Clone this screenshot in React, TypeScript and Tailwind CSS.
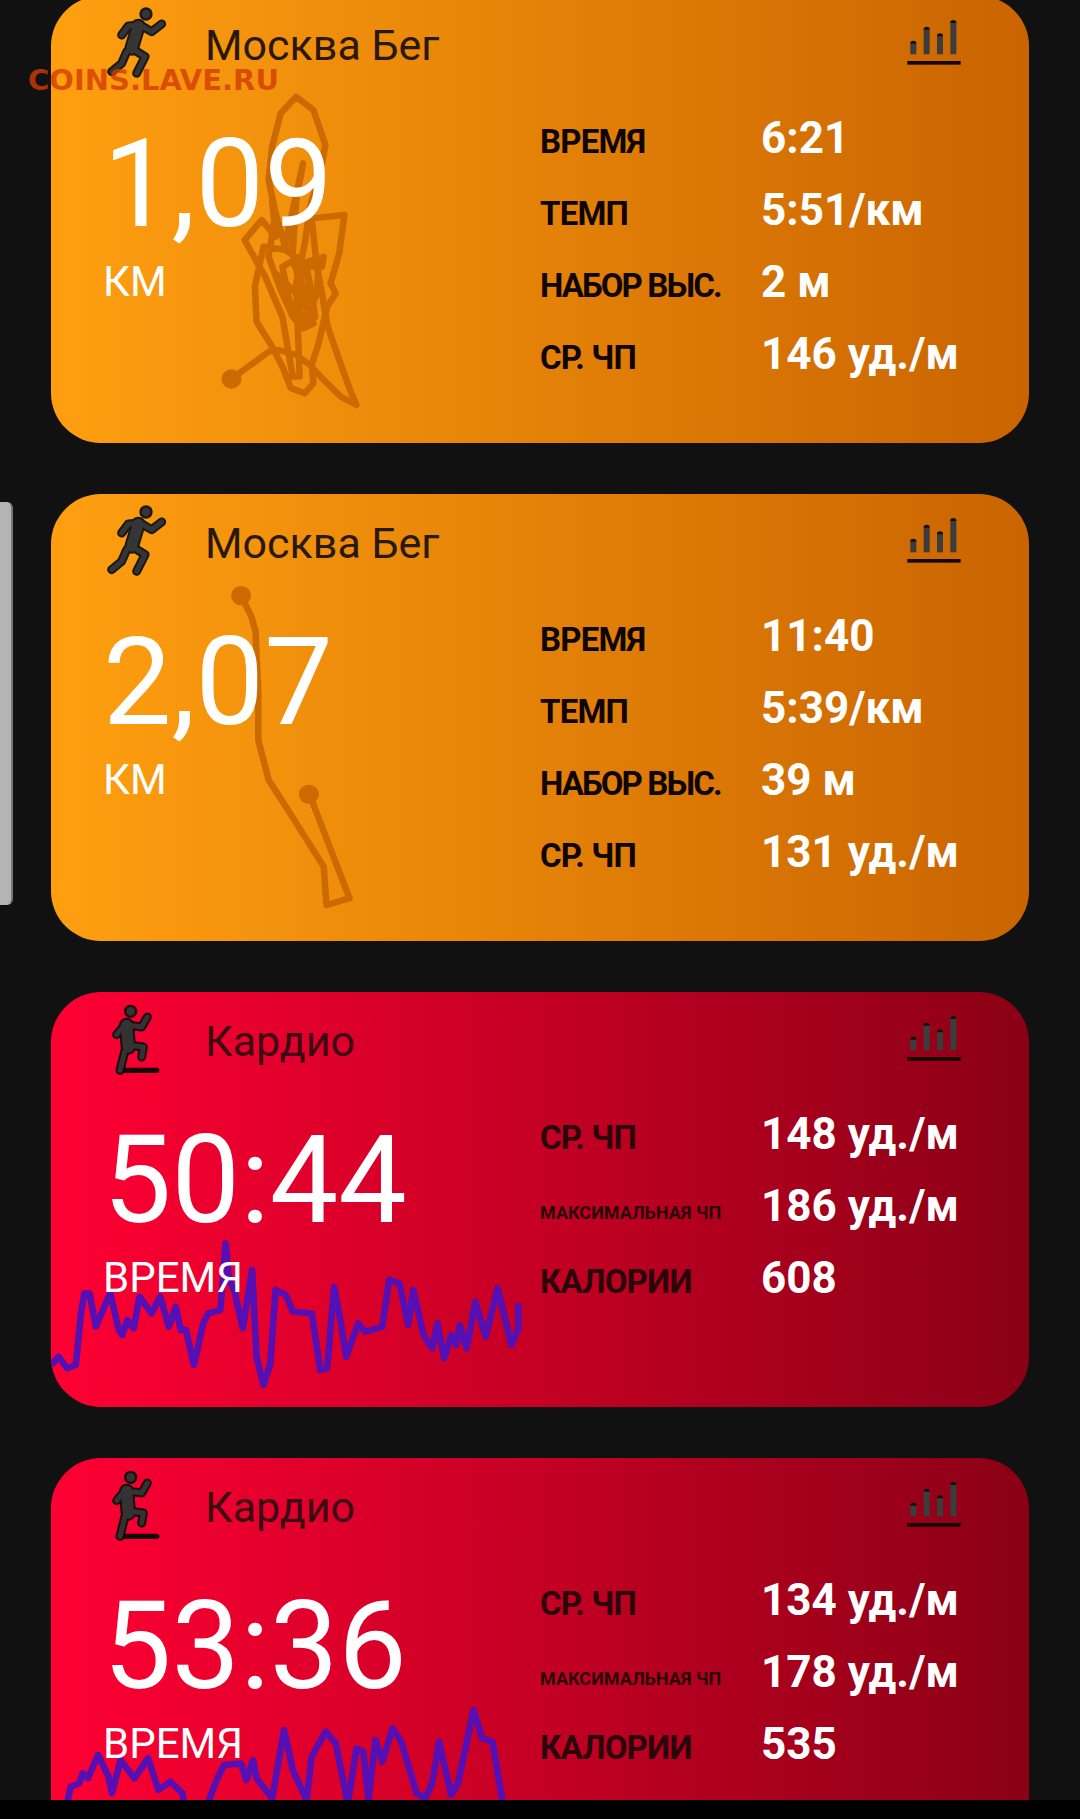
const ROUTE_ONE =
  "672,1137 780,1055 810,1050 860,1065 900,1095 940,1140 990,1190 1035,1215 1015,1165 985,1080 950,975 935,880 920,800 905,655 1000,645 985,760 960,850 975,880 950,920 925,1030 905,1095 910,1150 885,1180 845,1165 820,1100 790,1040 745,965 740,860 765,740 830,750 880,790 940,770 935,800 890,800 905,880 915,950 880,985 850,950 815,870 780,770 800,640 780,540 790,440 815,340 860,290 910,330 945,435 925,540 900,620 885,730 860,850 870,1130 850,1130 820,950 770,830 710,720 760,660 800,710 790,600 830,750 835,700 880,490 860,600 850,760 880,900 910,970 880,985 840,900 820,800 870,770 900,850 860,960 900,940 870,820 850,790 925,800 920,880 890,960 830,900 800,820 860,880 880,970"

const ROUTE_TWO =
  "700,347 730,410 742,455 750,640 750,780 780,900 830,980 940,1160 948,1275 1015,1255 905,960 897,943"

const PULSE_ONE =
  "150,1155 170,1130 195,1165 220,1155 235,1000 245,940 260,940 278,1040 320,940 345,1050 355,1065 370,1020 388,1045 405,950 440,1000 465,950 490,1040 510,980 525,1050 540,1050 563,1155 590,1030 605,1000 640,990 655,790 665,900 680,930 705,1045 732,870 745,1130 765,1215 785,1150 800,930 830,945 850,995 905,1000 930,1170 950,1165 970,920 990,1030 1005,1130 1040,1030 1060,1055 1110,1040 1130,900 1160,910 1185,1035 1200,930 1230,1065 1255,1105 1270,1030 1290,1135 1310,1065 1325,1095 1335,1035 1355,1105 1380,965 1410,1070 1445,925 1485,1095 1505,1045 1505,970"

const PULSE_TWO =
  "195,1090 205,1040 230,1030 240,1000 255,1015 285,945 315,1010 325,1060 350,960 390,1015 430,955 460,1050 495,1025 530,1060 535,1100 600,1100 625,1030 650,975 700,970 715,1020 735,960 745,1015 790,1075 825,870 850,990 890,1080 905,950 945,875 975,910 1010,1090 1035,925 1055,935 1070,1080 1090,900 1110,965 1140,865 1165,905 1210,1060 1235,1075 1255,1030 1275,905 1310,1065 1330,1030 1375,810 1400,895 1430,905 1460,1090"

function RunIcon() {
  const limbs = ["95,105 115,78 150,75 185,95 215,72", "125,145 165,170 140,220", "110,155 95,190 65,215"]
  return (
    <svg viewBox="0 0 300 270" className="mt-[8px] h-[90px] w-[100px] shrink-0" fill="none" strokeLinecap="round" strokeLinejoin="round">
      {limbs.map((l) => <polyline key={l} points={l} stroke="#1c1710" strokeWidth="27" />)}
      <polyline points="145,78 125,145" stroke="#1c1710" strokeWidth="44" />
      <circle cx="168" cy="42" r="20" fill="#1c1710" />
      {limbs.map((l) => <polyline key={l} points={l} stroke="#353535" strokeWidth="15" />)}
      <polyline points="145,78 125,145" stroke="#353535" strokeWidth="32" />
      <circle cx="168" cy="42" r="13" fill="#353535" />
    </svg>
  )
}

function CardioIcon() {
  const limbs = ["80,128 105,98 155,105 172,75", "120,160 160,165 155,195", "105,175 90,235"]
  return (
    <svg viewBox="0 0 300 270" className="h-[90px] w-[100px] shrink-0" fill="none" strokeLinecap="round" strokeLinejoin="round">
      {limbs.map((l) => <polyline key={l} points={l} stroke="#1c0a0c" strokeWidth="27" />)}
      <polyline points="110,100 115,165" stroke="#1c0a0c" strokeWidth="46" />
      <circle cx="122" cy="58" r="20" fill="#1c0a0c" />
      <polyline points="105,235 200,235" stroke="#16060a" strokeWidth="16" />
      {limbs.map((l) => <polyline key={l} points={l} stroke="#333333" strokeWidth="15" />)}
      <polyline points="110,100 115,165" stroke="#333333" strokeWidth="34" />
      <circle cx="122" cy="58" r="13" fill="#333333" />
    </svg>
  )
}

function BarsIcon() {
  return (
    <svg viewBox="0 0 300 240" className="h-[80px] w-[100px] shrink-0" fill="none">
      {[
        [70, 122],
        [110, 80],
        [150, 100],
        [190, 60],
      ].map(([x, top]) => (
        <g key={x}>
          <line x1={x} y1={top} x2={x} y2="160" stroke="#3c3c3c" strokeWidth="18" />
          <path d={`M${x - 9} ${top + 6}a9 9 0 0 1 18 0z`} fill="#15100c" />
        </g>
      ))}
      <rect x="52" y="180" width="160" height="11" fill="#160804" />
    </svg>
  )
}

type Row = { label: string; value: string; small?: boolean; tight?: boolean }

type CardProps = {
  kind: "run" | "cardio"
  title: string
  big: string
  unit: string
  rows: Row[]
  line: string
  viewBox: string
  dots?: number[][]
  height: string
}

function Card({ kind, title, big, unit, rows, line, viewBox, dots, height }: CardProps) {
  const run = kind === "run"
  return (
    <div
      className={`relative shrink-0 overflow-hidden rounded-[50px] bg-linear-to-r/srgb ${height} ${
        run ? "from-[#ff9f10] to-[#c96400]" : "from-[#ff0033] to-[#8a0015]"
      }`}
    >
      <svg viewBox={viewBox} preserveAspectRatio="none" className="absolute left-0 top-0 h-full w-full" fill="none">
        <polyline
          points={line}
          stroke={run ? "#cb6a00" : "#5410b4"}
          strokeWidth="19"
          strokeLinejoin="round"
        />
        {dots?.map(([x, y]) => <circle key={x} cx={x} cy={y} r="29" fill="#cb6a00" />)}
      </svg>

      <div className="relative">
        <div className="flex h-[90px] items-center pl-[39px] pr-[39px]">
          {run ? <RunIcon /> : <CardioIcon />}
          <div className={`ml-[15px] mt-[9px] flex-1 text-[43px] leading-none ${run ? "text-[#2a1808]" : "text-[#3c0a12]"}`}>{title}</div>
          <BarsIcon />
        </div>

        <div className="flex pt-4">
          <div className="w-[489px] pl-[52px] pt-[22px]">
            <div className="h-[122px] text-[122px] leading-[122px] text-white">{big}</div>
            <div className="mt-[12px] text-[42px] leading-[48px] text-white">{unit}</div>
          </div>
          <div className="flex-1">
            {rows.map((r) => (
              <div key={r.label} className="flex h-[72px] items-center">
                <div
                  className={`w-[221px] font-bold ${run ? "text-[#0f0602]" : "text-[#2a060a]"} ${
                    r.small
                      ? "pt-[12px] text-[18px]"
                      : r.tight
                        ? "pt-[7px] text-[33px] tracking-[-1.9px]"
                        : "pt-[7px] text-[33px] tracking-[-0.8px]"
                  }`}
                >
                  {r.label}
                </div>
                <div className="text-[44px] font-bold leading-none text-white">{r.value}</div>
              </div>
            ))}
          </div>
        </div>
      </div>
    </div>
  )
}

export default function App() {
  return (
    <div className="relative flex h-[1819px] w-[1080px] flex-col overflow-hidden bg-black font-['Roboto',sans-serif]">
      <div className="flex h-[1800px] flex-col gap-[51px] overflow-hidden bg-[#111111] px-[51px]">
        <div className="-mt-1 flex flex-col gap-[51px]">
          <Card
            kind="run"
            title="Москва Бег"
            big="1,09"
            unit="КМ"
            height="h-[447px]"
            line={ROUTE_ONE}
            viewBox="148 -12 2840 1341"
            dots={[[672, 1137]]}
            rows={[
              { label: "ВРЕМЯ", value: "6:21" },
              { label: "ТЕМП", value: "5:51/км" },
              { label: "НАБОР ВЫС.", value: "2 м", tight: true },
              { label: "СР. ЧП", value: "146 уд./м" },
            ]}
          />
          <Card
            kind="run"
            title="Москва Бег"
            big="2,07"
            unit="КМ"
            height="h-[447px]"
            line={ROUTE_TWO}
            viewBox="148 42 2840 1341"
            dots={[
              [700, 347],
              [897, 943],
            ]}
            rows={[
              { label: "ВРЕМЯ", value: "11:40" },
              { label: "ТЕМП", value: "5:39/км" },
              { label: "НАБОР ВЫС.", value: "39 м", tight: true },
              { label: "СР. ЧП", value: "131 уд./м" },
            ]}
          />
          <Card
            kind="cardio"
            title="Кардио"
            big="50:44"
            unit="ВРЕМЯ"
            height="h-[415px]"
            line={PULSE_ONE}
            viewBox="148 36 2840 1245"
            rows={[
              { label: "СР. ЧП", value: "148 уд./м" },
              { label: "МАКСИМАЛЬНАЯ ЧП", value: "186 уд./м", small: true },
              { label: "КАЛОРИИ", value: "608" },
            ]}
          />
          <Card
            kind="cardio"
            title="Кардио"
            big="53:36"
            unit="ВРЕМЯ"
            height="h-[415px]"
            line={PULSE_TWO}
            viewBox="148 54 2840 1245"
            rows={[
              { label: "СР. ЧП", value: "134 уд./м" },
              { label: "МАКСИМАЛЬНАЯ ЧП", value: "178 уд./м", small: true },
              { label: "КАЛОРИИ", value: "535" },
            ]}
          />
        </div>
      </div>
      <div className="flex-1 bg-black" />

      {/* scroll handle and watermark sit over the page */}
      <div className="absolute left-0 top-[502px] h-[403px] w-[13px] rounded-r-[6px] border-r-2 border-[#777777] bg-[#b4b4b4]" />
      <div className="absolute left-[28px] top-[65px] font-['DejaVu_Sans',sans-serif] text-[29px] font-bold leading-[30px] text-[#d23c00]/80">
        COINS.LAVE.RU
      </div>
    </div>
  )
}
